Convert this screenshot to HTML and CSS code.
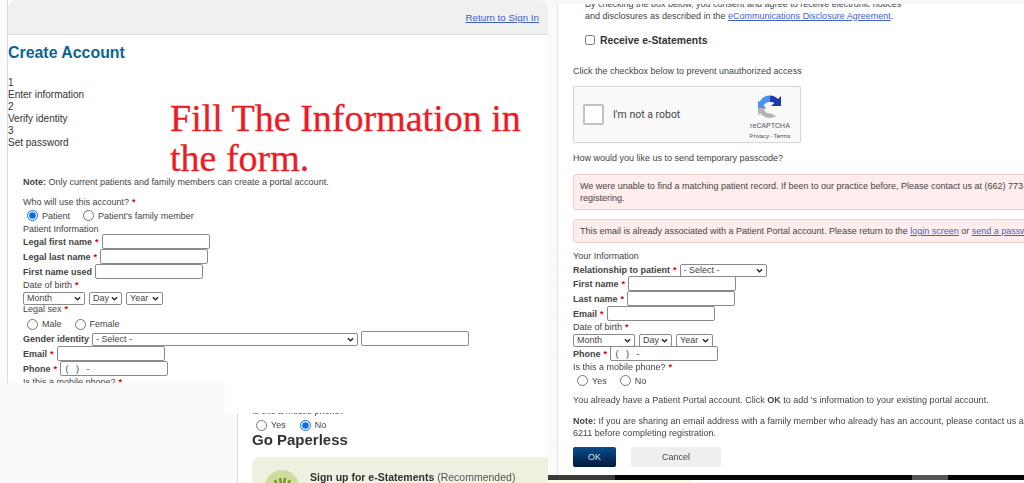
FILE: index.html
```html
<!DOCTYPE html>
<html lang="en">
<head>
<meta charset="utf-8">
<title>Create Account</title>
<link rel="stylesheet" href="styles.css">
</head>
<body>
<div class="canvas">
  <section class="piece piece-top">
    <header class="top-bar"><a href="#" class="link">Return to Sign In</a></header>
    <h1 class="title">Create Account</h1>
    <ol class="steps">
      <li>1</li><li>Enter information</li><li>2</li><li>Verify identity</li><li>3</li><li>Set password</li>
    </ol>
    <form class="form form-left">
      <p class="row note"><b>Note:</b> Only current patients and family members can create a portal account.</p>
      <div class="row h-who">Who will use this account? <i>*</i></div>
      <div class="row radios h-radio1">
        <label><input type="radio" name="who" checked> Patient</label>
        <label><input type="radio" name="who"> Patient's family member</label>
      </div>
      <div class="row h-info">Patient Information</div>
      <div class="row field"><b>Legal first name</b> <i>*</i><input class="txt" type="text"></div>
      <div class="row field"><b>Legal last name</b> <i>*</i><input class="txt" type="text"></div>
      <div class="row field"><b>First name used</b><input class="txt" type="text"></div>
      <div class="row h-dob">Date of birth <i>*</i></div>
      <div class="row dates">
        <select class="sel month"><option>Month</option></select>
        <select class="sel day"><option>Day</option></select>
        <select class="sel year"><option>Year</option></select>
      </div>
      <div class="row h-sex">Legal sex <i>*</i></div>
      <div class="row radios h-radio2">
        <label><input type="radio" name="sex"> Male</label>
        <label><input type="radio" name="sex"> Female</label>
      </div>
      <div class="row field gender"><b>Gender identity</b>
        <select class="sel wide"><option>- Select -</option></select>
        <input class="txt" type="text">
      </div>
      <div class="row field"><b>Email</b> <i>*</i><input class="txt" type="text"></div>
      <div class="row field"><b>Phone</b> <i>*</i><input class="txt" type="text" value=" (   )   -"></div>
      <div class="row h-mobile">Is this a mobile phone? <i>*</i></div>
    </form>
  </section>

  <p class="overlay-title">Fill The Information in the form.</p>

  <div class="patch patch-left"></div>

  <section class="piece piece-low">
    <div class="low-inner">
      <div class="row h-cut">Is this a mobile phone? <i>*</i></div>
      <div class="row radios h-radio3">
        <label><input type="radio" name="mob"> Yes</label>
        <label><input type="radio" name="mob" checked> No</label>
      </div>
      <h2 class="paperless">Go Paperless</h2>
      <div class="card">
        <svg class="leaf" viewBox="0 0 34 34" width="34" height="34" aria-hidden="true">
          <circle cx="17" cy="17" r="17" fill="#cfdc9c"/>
          <path d="M6 14l3 3M10 10l2 5M15 8l1 6M20 8l-1 6M25 10l-2 5M29 14l-4 3M12 17l10 0" stroke="#6f9a22" stroke-width="2.4" fill="none"/>
        </svg>
        <p class="card-text"><b>Sign up for e-Statements</b> (Recommended)</p>
      </div>
    </div>
  </section>

  <section class="piece piece-right">
    <div class="top-strip"></div>
    <div class="right-inner">
      <div class="consent">
        <p class="consent-text">By checking the box below, you consent and agree to receive electronic notices<br>and disclosures as described in the <a href="#" class="link">eCommunications Disclosure Agreement</a>.</p>
        <label class="estatements"><input type="checkbox"> <b>Receive e-Statements</b></label>
      </div>
      <p class="click">Click the checkbox below to prevent unauthorized access</p>
      <div class="captcha">
        <span class="cap-box"></span>
        <span class="cap-label">I'm not a robot</span>
        <div class="cap-brand">
          <svg viewBox="0 0 24 24" width="24" height="24" aria-hidden="true">
            <path d="M12 0.5A11.5 11.5 0 0 0 1.6 7L0 5.5L0 13L8 13L5.6 10.5A6.8 6.8 0 0 1 12 7L14 4Z" fill="#4a90f5"/>
            <path d="M12 0.5A11.5 11.5 0 0 1 20 4L23 1L23 11L13 11L16.5 8A6.8 6.8 0 0 0 12 7Z" fill="#1c3aa9"/>
            <path d="M0 13L8 13L6.2 15.2A6.8 6.8 0 0 0 13 18.4L17 20.5L18 21A11.5 11.5 0 0 1 2 18L0 21Z" fill="#b5b5b5"/>
          </svg>
          <span class="cap-name">reCAPTCHA</span>
          <span class="cap-terms">Privacy - Terms</span>
        </div>
      </div>
      <p class="how">How would you like us to send temporary passcode?</p>
      <div class="alert alert-a">We were unable to find a matching patient record. If been to our practice before, Please contact us at (662) 773-6211 before<br>registering.</div>
      <div class="alert alert-b">This email is already associated with a Patient Portal account. Please return to the <a href="#" class="link">login screen</a> or <a href="#" class="link">send a password reset</a>.</div>
      <form class="form">
        <div class="row r-info">Your Information</div>
        <div class="row field r-rel"><b>Relationship to patient</b> <i>*</i><select class="sel rel"><option>- Select -</option></select></div>
        <div class="row field r-first"><b>First name</b> <i>*</i><input class="txt" type="text"></div>
        <div class="row field"><b>Last name</b> <i>*</i><input class="txt" type="text"></div>
        <div class="row field"><b>Email</b> <i>*</i><input class="txt" type="text"></div>
        <div class="row h-dob">Date of birth <i>*</i></div>
        <div class="row dates">
          <select class="sel month"><option>Month</option></select>
          <select class="sel day"><option>Day</option></select>
          <select class="sel year"><option>Year</option></select>
        </div>
        <div class="row field r-phone"><b>Phone</b> <i>*</i><input class="txt" type="text" value=" (   )   -"></div>
        <div class="row h-mobile2">Is this a mobile phone? <i>*</i></div>
        <div class="row radios h-radio4">
          <label><input type="radio" name="mob2"> Yes</label>
          <label><input type="radio" name="mob2"> No</label>
        </div>
      </form>
      <p class="already">You already have a Patient Portal account. Click <b>OK</b> to add 's information to your existing portal account.</p>
      <p class="note2"><b>Note:</b> If you are sharing an email address with a family member who already has an account, please contact us at (662) 773-<br>6211 before completing registration.</p>
      <div class="actions">
        <button type="button" class="btn ok">OK</button>
        <button type="button" class="btn cancel">Cancel</button>
      </div>
    </div>
    <div class="taskbar"><span class="tb-a"></span><span class="tb-b"></span><span class="tb-d"></span></div>
    <div class="under"><span class="under-a"></span></div>
  </section>
</div>
</body>
</html>
```
FILE: styles.css
```css
* { box-sizing: border-box; }
html, body { margin: 0; padding: 0; height: 100%; overflow: hidden; background: #fff; }
body { font-family: "Liberation Sans", Arial, sans-serif; font-size: 9px; color: #444; }
p, h1, h2, ol { margin: 0; padding: 0; }
ol { list-style: none; }
i { font-style: normal; color: #e3000f; font-weight: 700; }
b { font-weight: 700; }
.canvas { position: relative; width: 1024px; height: 483px; overflow: hidden; filter: blur(0.4px); }
.piece { position: absolute; overflow: hidden; background: #fff; }
.link { color: #3f62c9; text-decoration: underline; }

/* Overlay caption */
.overlay-title { position: absolute; left: 170px; top: 98px; width: 370px; font-family: "Liberation Serif", "Times New Roman", serif; font-size: 38px; line-height: 40px; color: #ed1c24; -webkit-text-stroke: 0.3px #ed1c24; }

/* Upper left window */
.piece-top { left: 0; top: 0; width: 548px; height: 383px; border-left: 7px solid #fafafa; padding-left: 1px; box-shadow: inset 1px 0 0 #ddd; }
.top-bar { height: 35px; background: #f0f0f0; border-bottom: 1px solid #ddd; border-top-left-radius: 8px; border-top-right-radius: 8px; display: flex; justify-content: flex-end; padding: 12px 9px 0 0; font-size: 9.8px; line-height: 12px; }
.title { font-size: 15.9px; line-height: 18px; color: #0b6594; margin-top: 9px; }
.steps { margin-top: 15px; font-size: 10px; line-height: 12px; color: #333; }
.form-left { padding: 0 0 0 15px; margin-top: 27px; }
.row { display: flex; align-items: center; white-space: nowrap; gap: 3px; }
.note { height: 12px; display: block; line-height: 12px; }
.h-who { height: 12px; margin-top: 8px; }
.radios { gap: 9px; }
.radios label { display: flex; align-items: center; gap: 4px; }
.radios input { width: 11px; height: 11px; margin: 0 0 0 4px; accent-color: #0a6ee8; }
.h-radio1 { height: 15px; }
.h-info { height: 11px; }
.field { height: 15px; color: #444; }
.field b { font-size: 9px; }
.txt { width: 108px; height: 15px; padding: 0 2px; border: 1px solid #8a8a8a; border-radius: 2px; font: 9px "Liberation Sans", Arial, sans-serif; color: #444; background: #fff; }
.sel { appearance: none; -webkit-appearance: none; height: 13px; padding: 0 12px 0 3px; border: 1px solid #8a8a8a; border-radius: 2px; font: 9px/11px "Liberation Sans", Arial, sans-serif; color: #444; background: #fff url("data:image/svg+xml,%3Csvg xmlns='http://www.w3.org/2000/svg' viewBox='0 0 8 5'%3E%3Cpath d='M1 1l3 3 3-3' fill='none' stroke='%23222' stroke-width='1.5'/%3E%3C/svg%3E") no-repeat right 3px center / 7px 5px; }
.h-dob { height: 12px; }
.dates { height: 15px; gap: 4px; }
.month { width: 62px; }
.day { width: 33px; }
.year { width: 37px; }
.h-sex { height: 6px; }
.h-radio2 { height: 19px; padding-top: 5px; }
.gender { gap: 3px; }
.wide { width: 266px; margin-top: 2px; }
.h-mobile { height: 12px; }

/* Left-bottom patch */
.patch-left { position: absolute; left: 0; top: 383px; width: 225px; height: 100px; background: #fafafa; }

/* Lower left window */
.piece-low { left: 225px; top: 383px; width: 323px; height: 100px; padding-top: 30px; }
.low-inner { height: 70px; overflow: hidden; background: #fff; border-left: 1px solid #ddd; margin-left: 12px; padding-left: 14px; box-shadow: -12px 0 0 #fafafa; }
.h-cut { height: 12px; margin-top: -8px; }
.h-radio3 { height: 16px; gap: 10px; }
.paperless { font-size: 15px; line-height: 18px; color: #333; margin-top: -2px; }
.card { margin-top: 8px; height: 40px; background: #eff1e0; border-top-left-radius: 8px; padding: 13px 0 0 13px; display: flex; gap: 11px; align-items: flex-start; }
.leaf { flex: none; }
.card-text { font-size: 10.5px; line-height: 12px; padding-top: 1px; white-space: nowrap; color: #555; }
.card-text b { color: #333; }

/* Right window */
.piece-right { left: 548px; top: 0; width: 476px; height: 483px; }
.top-strip { position: absolute; left: 0; top: 0; right: 0; height: 4px; background: #f8f8f8; z-index: 1; }
.right-inner { height: 475px; overflow: hidden; width: 740px; margin-left: 9px; border-left: 1px solid #e4e4e4; padding: 0 0 0 15px; box-shadow: -9px 0 0 #fafafa; }
.consent { padding-left: 12px; }
.consent-text { line-height: 11.5px; margin-top: -1px; }
.estatements { display: flex; align-items: center; gap: 5px; margin-top: 11px; height: 14px; font-size: 10.4px; color: #333; }
.estatements input { width: 10px; height: 10px; margin: 0; }
.click { margin-top: 18px; line-height: 12px; }
.captcha { width: 228px; height: 57px; margin-top: 9px; background: #f9f9f9; border: 1px solid #d8d8d8; border-radius: 2px; display: flex; align-items: center; padding: 0 9px; box-shadow: 0 0 2px rgba(0,0,0,.08); }
.cap-box { width: 21px; height: 21px; background: #fff; border: 2px solid #c1c1c1; border-radius: 2px; margin-right: 9px; flex: none; }
.cap-label { font-family: Roboto, "Liberation Sans", sans-serif; font-size: 10.5px; color: #444; flex: 1; }
.cap-brand { display: flex; flex-direction: column; align-items: center; width: 44px; margin-right: -1px; padding-top: 5px; }
.cap-name { font-family: Roboto, "Liberation Sans", sans-serif; font-size: 7.4px; line-height: 8px; color: #555; margin-top: 3px; }
.cap-terms { font-family: Roboto, "Liberation Sans", sans-serif; font-size: 6px; line-height: 8px; color: #555; margin-top: 2px; white-space: nowrap; }
.how { margin-top: 9px; line-height: 12px; }
.alert { background: #ffecec; border: 1px solid #f6cdcd; border-radius: 3px; padding: 6px; line-height: 11.5px; }
.alert-a { margin-top: 10px; height: 36px; }
.alert-b { margin-top: 9px; height: 24px; white-space: nowrap; }
.r-info { height: 12px; margin-top: 7px; }
.r-rel { height: 15px; }
.rel { width: 87px; margin-top: 2px; }
.r-first { margin-top: -1px; }
.r-phone { margin-top: -2px; }
.h-mobile2 { height: 11px; }
.h-radio4 { height: 17px; }
.already { margin-top: 5px; line-height: 12px; }
.note2 { margin-top: 10px; line-height: 11.5px; }
.actions { display: flex; gap: 15px; margin-top: 8px; align-items: flex-end; }
.btn { height: 20px; border: 0; border-radius: 2px; font: 9px "Liberation Sans", Arial, sans-serif; padding: 0; }
.ok { width: 43px; color: #dfe6f0; background: linear-gradient(#0a4d8c, #001a3c); }
.cancel { width: 90px; color: #444; background: #efefef; }
.taskbar { height: 5px; background: #050505; display: flex; }
.tb-a { width: 67px; background: #3a3a3a; }
.tb-b { width: 297px; }
.tb-d { width: 36px; background: #555; }
.under { height: 3px; background: #fff; }
.under-a { display: block; width: 145px; height: 3px; background: #f8f8e6; }
```
